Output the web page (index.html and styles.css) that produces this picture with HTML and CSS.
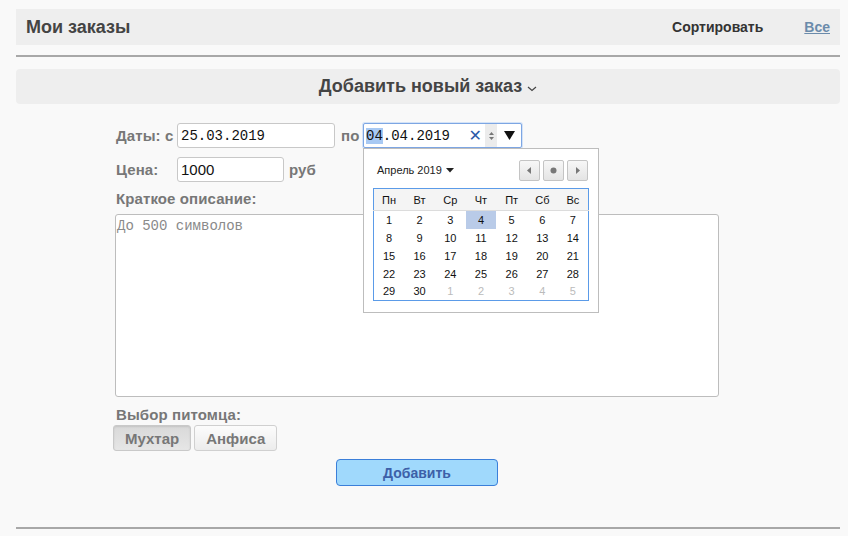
FILE: index.html
```html
<!DOCTYPE html>
<html lang="ru">
<head>
<meta charset="utf-8">
<title>Мои заказы</title>
<link rel="stylesheet" href="styles.css">
</head>
<body>
<div class="page">
  <div class="header">
    <div class="title">Мои заказы</div>
    <div class="header-right">
      <span class="sort">Сортировать</span>
      <a class="all" href="#">Все</a>
    </div>
  </div>
  <div class="divider"></div>
  <div class="addbar">Добавить новый заказ
    <svg class="chev" width="10" height="6" viewBox="0 0 10 6"><path d="M1 1 L5 4.5 L9 1" fill="none" stroke="#444" stroke-width="1.2"/></svg>
  </div>

  <div class="form">
    <div class="row dates">
      <span class="label lbl-dates">Даты: с</span>
      <input class="inp mono date1" type="text" value="25.03.2019">
      <span class="label lbl-po">по</span>
      <div class="datewrap">
        <div class="inp mono date2">
          <span class="dtext"><span class="sel">04</span>.04.2019</span>
          <span class="ctrls">
            <span class="clear">✕</span>
            <span class="spin"><svg width="7" height="12" viewBox="0 0 7 12"><path d="M1 5 L3.5 2 L6 5 Z" fill="#777"/><path d="M1 7 L3.5 10 L6 7 Z" fill="#777"/></svg></span>
            <span class="drop"><svg width="11" height="9" viewBox="0 0 11 9"><path d="M0 0 L11 0 L5.5 9 Z" fill="#111"/></svg></span>
          </span>
        </div>
        <div class="cal">
          <div class="cal-head">
            <div class="month">Апрель 2019 <svg width="8" height="5" viewBox="0 0 8 5"><path d="M0 0 L8 0 L4 4.5 Z" fill="#222"/></svg></div>
            <div class="navs">
              <span class="nav"><svg width="5" height="7" viewBox="0 0 5 7"><path d="M4 0 L0 3.5 L4 7 Z" fill="#777"/></svg></span>
              <span class="nav"><svg width="7" height="7" viewBox="0 0 7 7"><circle cx="3.5" cy="3.5" r="3" fill="#777"/></svg></span>
              <span class="nav"><svg width="5" height="7" viewBox="0 0 5 7"><path d="M1 0 L5 3.5 L1 7 Z" fill="#777"/></svg></span>
            </div>
          </div>
          <table class="grid">
            <thead>
              <tr><th>Пн</th><th>Вт</th><th>Ср</th><th>Чт</th><th>Пт</th><th>Сб</th><th>Вс</th></tr>
            </thead>
            <tbody>
              <tr><td>1</td><td>2</td><td>3</td><td class="cur">4</td><td>5</td><td>6</td><td>7</td></tr>
              <tr><td>8</td><td>9</td><td>10</td><td>11</td><td>12</td><td>13</td><td>14</td></tr>
              <tr><td>15</td><td>16</td><td>17</td><td>18</td><td>19</td><td>20</td><td>21</td></tr>
              <tr><td>22</td><td>23</td><td>24</td><td>25</td><td>26</td><td>27</td><td>28</td></tr>
              <tr><td>29</td><td>30</td><td class="other">1</td><td class="other">2</td><td class="other">3</td><td class="other">4</td><td class="other">5</td></tr>
            </tbody>
          </table>
        </div>
      </div>
    </div>

    <div class="row price">
      <span class="label lbl-price">Цена:</span>
      <input class="inp sans price-inp" type="text" value="1000">
      <span class="label lbl-rub">руб</span>
    </div>

    <div class="label lbl-desc">Краткое описание:</div>
    <textarea class="desc mono" placeholder="До 500 символов"></textarea>

    <div class="label lbl-pet">Выбор питомца:</div>
    <div class="pets">
      <button class="pet pressed">Мухтар</button>
      <button class="pet">Анфиса</button>
    </div>

    <div class="submit-row">
      <button class="submit">Добавить</button>
    </div>
  </div>
  <div class="divider bottom"></div>
</div>
</body>
</html>
```

FILE: styles.css
```css
* { box-sizing: border-box; }
html, body { margin: 0; padding: 0; }
body {
  background: #f9f9f9;
  font-family: "Liberation Sans", Arial, sans-serif;
  color: #333;
}
.page {
  margin: 9px 8px 0 16px;
}
.header {
  height: 36px;
  background: #eeeeee;
  display: flex;
  align-items: center;
  justify-content: space-between;
  padding: 0 10px;
}
.title {
  font-size: 18px;
  font-weight: bold;
  color: #444;
}
.header-right {
  display: flex;
  align-items: center;
  gap: 41px;
}
.sort {
  font-size: 14px;
  font-weight: bold;
  color: #333;
}
.all {
  font-size: 14px;
  font-weight: bold;
  color: #6b8bab;
  text-decoration: underline;
}
.divider {
  margin-top: 10px;
  border-top: 2px solid #a8a8a8;
}
.addbar {
  margin-top: 12px;
  height: 35px;
  background: #eeeeee;
  border-radius: 4px;
  display: flex;
  align-items: center;
  justify-content: center;
  font-size: 18px;
  font-weight: bold;
  color: #444;
}
.chev { margin-left: 5px; margin-top: 4px; }

.form {
  padding-left: 100px;
  padding-top: 19px;
  width: 704px;
}
.row {
  display: flex;
  align-items: center;
}
.label {
  font-size: 15px;
  font-weight: bold;
  color: #777;
  letter-spacing: 0.1px;
}
.inp {
  height: 25px;
  border: 1px solid #c8c8c8;
  border-radius: 3px;
  background: #fff;
  padding: 0 3px;
  color: #111;
  outline: none;
}
.mono {
  font-family: "Liberation Mono", "Courier New", monospace;
}
.sans {
  font-family: "Liberation Sans", Arial, sans-serif;
}
.lbl-dates { width: 61px; }
.date1 {
  width: 158px;
  font-size: 14px;
}
.lbl-po { margin-left: 6px; width: 22px; }
.datewrap { position: relative; }
.date2 {
  width: 159px;
  font-size: 14px;
  border-color: #7da6e3;
  border-radius: 2px;
  display: flex;
  align-items: center;
  padding: 0 0 0 2px;
  box-shadow: 0 0 0 1px #d4e3f7;
}
.dtext { flex: 1; }
.sel { background: #a8c9f3; }
.ctrls {
  display: flex;
  align-items: center;
  height: 100%;
}
.clear {
  font-family: "DejaVu Sans", sans-serif;
  color: #2d5aa8;
  font-size: 16px;
  font-weight: bold;
  margin-right: 3px;
}
.spin {
  width: 12px;
  height: 23px;
  background: #ececec;
  display: flex;
  align-items: center;
  justify-content: center;
}
.drop {
  width: 24px;
  display: flex;
  justify-content: center;
  align-items: center;
}

.cal {
  position: absolute;
  left: 0;
  top: 25px;
  width: 236px;
  height: 165px;
  background: #fff;
  border: 1px solid #bdbdbd;
  padding: 10px 9px 0 9px;
  z-index: 5;
}
.cal-head {
  display: flex;
  align-items: center;
  justify-content: space-between;
  height: 22px;
  padding-left: 4px;
}
.month {
  font-size: 11px;
  color: #222;
  display: flex;
  align-items: center;
  gap: 4px;
}
.navs { display: flex; gap: 3px; padding-right: 1px; }
.nav {
  width: 21px;
  height: 21px;
  border: 1px solid #c4c4c4;
  border-radius: 2px;
  background: linear-gradient(#f7f7f7, #e4e4e4);
  display: flex;
  align-items: center;
  justify-content: center;
}
.grid {
  margin-top: 7px;
  width: 216px;
  border: 1px solid #5b9be8;
  border-collapse: collapse;
  font-size: 11px;
  table-layout: fixed;
}
.grid th {
  height: 22px;
  background: #f4f4f4;
  font-weight: normal;
  color: #111;
  border-bottom: 1px solid #dcdcdc;
  padding: 0;
}
.grid td {
  height: 18px;
  text-align: center;
  padding: 0;
  color: #111;
}
.grid td.cur { background: #b9cbe8; }
.grid td.other { color: #bbb; }

.price { margin-top: 9px; }
.lbl-price { width: 61px; }
.price-inp {
  width: 107px;
  font-size: 15px;
}
.lbl-rub { margin-left: 5px; }

.lbl-desc { margin-top: 8px; height: 16px; }
.desc {
  display: block;
  margin: 8px 0 0 -1px;
  width: 604px;
  height: 183px;
  border: 1px solid #bdbdbd;
  border-radius: 3px;
  background: #fff;
  font-size: 14px;
  padding: 3px 1px;
  resize: none;
  outline: none;
}
.desc::placeholder { color: #8a8a8a; }

.lbl-pet { margin-top: 9px; height: 16px; }
.pets {
  margin-top: 3px;
  margin-left: -3px;
  display: flex;
  gap: 3px;
}
.pet {
  height: 26px;
  font-family: "Liberation Sans", Arial, sans-serif;
  font-size: 15px;
  font-weight: bold;
  color: #777;
  border: 1px solid #d0d0d0;
  border-radius: 3px;
  background: linear-gradient(#fcfcfc, #ececec);
  padding: 0 11px;
}
.pet.pressed {
  background: linear-gradient(#d9d9d9, #e6e6e6);
  border-color: #c9c9c9;
  box-shadow: inset 0 1px 2px rgba(0,0,0,0.1);
}
.submit-row {
  display: flex;
  justify-content: center;
  margin: 8px 0 0 -1px;
  width: 604px;
}
.submit {
  width: 162px;
  height: 27px;
  background: #a0d9fc;
  border: 1px solid #3b7fd9;
  border-radius: 4px;
  font-family: "Liberation Sans", Arial, sans-serif;
  font-size: 14px;
  font-weight: bold;
  color: #3c60a8;
}
.divider.bottom {
  margin-top: 41px;
}
```
